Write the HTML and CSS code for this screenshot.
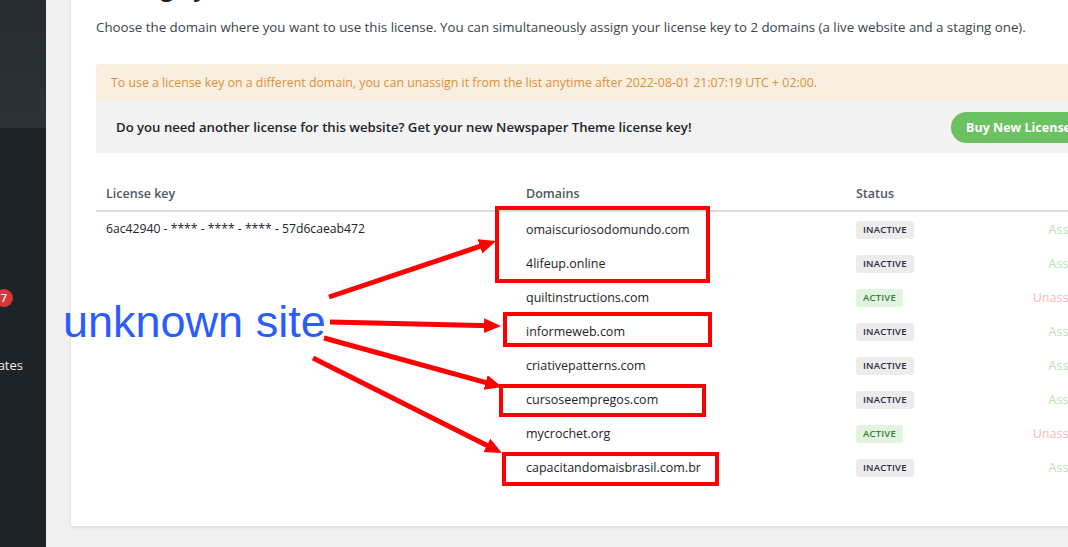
FILE: index.html
```html
<!DOCTYPE html>
<html lang="en">
<head>
<meta charset="utf-8">
<title>Manage your domains</title>
<link rel="stylesheet" href="styles.css">
</head>
<body>
<div class="layout">
  <aside class="sidebar">
    <div class="sb-top"></div>
    <div class="sb-menu">
      <div class="sb-item sb-badge-row"><span class="badge">7</span></div>
      <div class="sb-item sb-text"><span>Updates</span></div>
    </div>
  </aside>
  <main class="main">
    <section class="panel">
      <h1 class="title">Manage your domains</h1>
      <p class="intro">Choose the domain where you want to use this license. You can simultaneously assign your license key to 2 domains (a live website and a staging one).</p>
      <div class="notice">To use a license key on a different domain, you can unassign it from the list anytime after 2022-08-01 21:07:19 UTC + 02:00.</div>
      <div class="promo">
        <span class="promo-text">Do you need another license for this website? Get your new Newspaper Theme license key!</span>
        <a class="btn">Buy New License</a>
      </div>
      <table class="lic">
        <thead>
          <tr><th class="c-key">License key</th><th class="c-dom">Domains</th><th class="c-status">Status</th><th class="c-act"></th></tr>
        </thead>
        <tbody>
          <tr><td class="key" rowspan="8">6ac42940 - **** - **** - **** - 57d6caeab472</td><td>omaiscuriosodomundo.com</td><td><span class="tag">Inactive</span></td><td class="act assign">Assign</td></tr>
          <tr><td>4lifeup.online</td><td><span class="tag">Inactive</span></td><td class="act assign">Assign</td></tr>
          <tr><td>quiltinstructions.com</td><td><span class="tag on">Active</span></td><td class="act unassign">Unassign</td></tr>
          <tr><td>informeweb.com</td><td><span class="tag">Inactive</span></td><td class="act assign">Assign</td></tr>
          <tr><td>criativepatterns.com</td><td><span class="tag">Inactive</span></td><td class="act assign">Assign</td></tr>
          <tr><td>cursoseempregos.com</td><td><span class="tag">Inactive</span></td><td class="act assign">Assign</td></tr>
          <tr><td>mycrochet.org</td><td><span class="tag on">Active</span></td><td class="act unassign">Unassign</td></tr>
          <tr><td>capacitandomaisbrasil.com.br</td><td><span class="tag">Inactive</span></td><td class="act assign">Assign</td></tr>
        </tbody>
      </table>
    </section>
  </main>
</div>

<div class="annot">
  <svg class="annot-svg" width="1068" height="547" viewBox="0 0 1068 547" xmlns="http://www.w3.org/2000/svg">
    <defs>
      <marker id="ah" markerUnits="userSpaceOnUse" markerWidth="17" markerHeight="15" refX="7" refY="7.5" orient="auto">
        <path d="M0,0 L17,7.5 L0,15 z" fill="#ff0000"/>
      </marker>
    </defs>
    <g fill="none" stroke="#ff0000" stroke-width="4">
      <rect x="497" y="208" width="211" height="73"/>
      <rect x="505" y="314" width="205" height="31"/>
      <rect x="501" y="386" width="203" height="29"/>
      <rect x="504" y="454" width="213" height="30"/>
    </g>
    <g stroke="#ff0000" stroke-width="5" marker-end="url(#ah)">
      <line x1="329" y1="297" x2="486.5" y2="244.2"/>
      <line x1="330" y1="322" x2="491" y2="325.8"/>
      <line x1="324" y1="338" x2="492.4" y2="384.3"/>
      <line x1="313" y1="358" x2="493.1" y2="448.5"/>
    </g>
  </svg>
  <div class="annot-label">unknown site</div>
</div>
</body>
</html>
```

FILE: styles.css
```css
html, body {
  margin: 0;
  padding: 0;
  overflow: hidden;
  width: 1068px;
  height: 547px;
}
body {
  background: #f0f0f1;
  font-family: "Open Sans", "Noto Sans", sans-serif;
  color: #3c434a;
  position: relative;
}
.layout {
  display: flex;
  height: 547px;
}
.sidebar {
  width: 46px;
  flex: 0 0 46px;
  background: #1d2327;
  overflow: hidden;
}
.sb-top {
  height: 128px;
  background: linear-gradient(#262c31, #2c3338);
}
.sb-menu {
  padding-top: 161px;
}
.sb-item {
  display: flex;
  justify-content: flex-end;
  white-space: nowrap;
}
.sb-badge-row {
  padding-right: 33px;
  height: 18px;
}
.badge {
  flex: 0 0 18px;
  width: 18px;
  height: 18px;
  border-radius: 50%;
  background: #d63638;
  color: #fff;
  font-size: 11px;
  line-height: 18px;
  text-align: center;
  font-weight: 600;
}
.sb-text {
  margin-top: 48px;
  padding-right: 23px;
  color: #f0f0f1;
  font-size: 13px;
  line-height: 20px;
}
.main {
  flex: 1;
  min-width: 0;
  padding-left: 25px;
}
.panel {
  width: 1000px;
  margin-top: -28px;
  padding: 0 25px 42px;
  background: #fff;
  box-shadow: 0 1px 3px rgba(0, 0, 0, 0.12);
}
.title {
  margin: 0;
  font-size: 23px;
  line-height: 30px;
  font-weight: 700;
  color: #1d2327;
}
.intro {
  margin: 15px 0 0;
  font-size: 13.3px;
  line-height: 20px;
  color: #3c434a;
}
.notice {
  margin-top: 27px;
  height: 37px;
  display: flex;
  align-items: center;
  padding: 0 15px;
  background: #f9efe0;
  color: #dd8f37;
  font-size: 12.35px;
  border-radius: 3px 3px 0 0;
}
.promo {
  height: 52px;
  display: flex;
  align-items: center;
  justify-content: space-between;
  padding: 0 10px 0 20px;
  background: #f3f3f3;
}
.promo-text {
  font-size: 13.15px;
  font-weight: 600;
  color: #1d2327;
}
.btn {
  height: 31px;
  display: flex;
  align-items: center;
  padding: 0 15px;
  border-radius: 16px;
  background: #6cc163;
  color: #fff;
  font-size: 12.5px;
  font-weight: 700;
}
.lic {
  margin-top: 23px;
  width: 1000px;
  border-collapse: collapse;
  font-size: 12.5px;
  color: #1d2327;
}
.lic th {
  height: 34px;
  padding: 0 10px;
  text-align: left;
  font-weight: 600;
  color: #50575e;
  border-bottom: 2px solid #dcdcde;
}
.c-key { width: 400px; }
.c-dom { width: 310px; }
.c-status { width: 130px; }
.lic td {
  height: 34px;
  padding: 0 10px;
  vertical-align: middle;
}
.lic td.key {
  vertical-align: top;
  padding-top: 8px;
  font-size: 12.2px;
}
.tag {
  display: inline-block;
  height: 18px;
  line-height: 18px;
  padding: 0 7px;
  border-radius: 3px;
  background: #ececec;
  color: #2f2a3f;
  font-size: 9.5px;
  font-weight: 600;
  letter-spacing: 0.2px;
  text-transform: uppercase;
}
.tag.on {
  background: #e2f4df;
  color: #3d7c36;
}
.act {
  text-align: right;
}
.assign { color: #b9e1b3; }
.unassign { color: #f8b9b9; }
.annot {
  position: absolute;
  left: 0;
  top: 0;
  width: 1068px;
  height: 547px;
  pointer-events: none;
}
.annot-svg {
  position: absolute;
  left: 0;
  top: 0;
}
.annot-label {
  position: absolute;
  left: 63px;
  top: 296px;
  font-family: "Liberation Sans", Arial, sans-serif;
  font-size: 45px;
  line-height: 52px;
  color: #2b5cff;
  white-space: nowrap;
}
```
